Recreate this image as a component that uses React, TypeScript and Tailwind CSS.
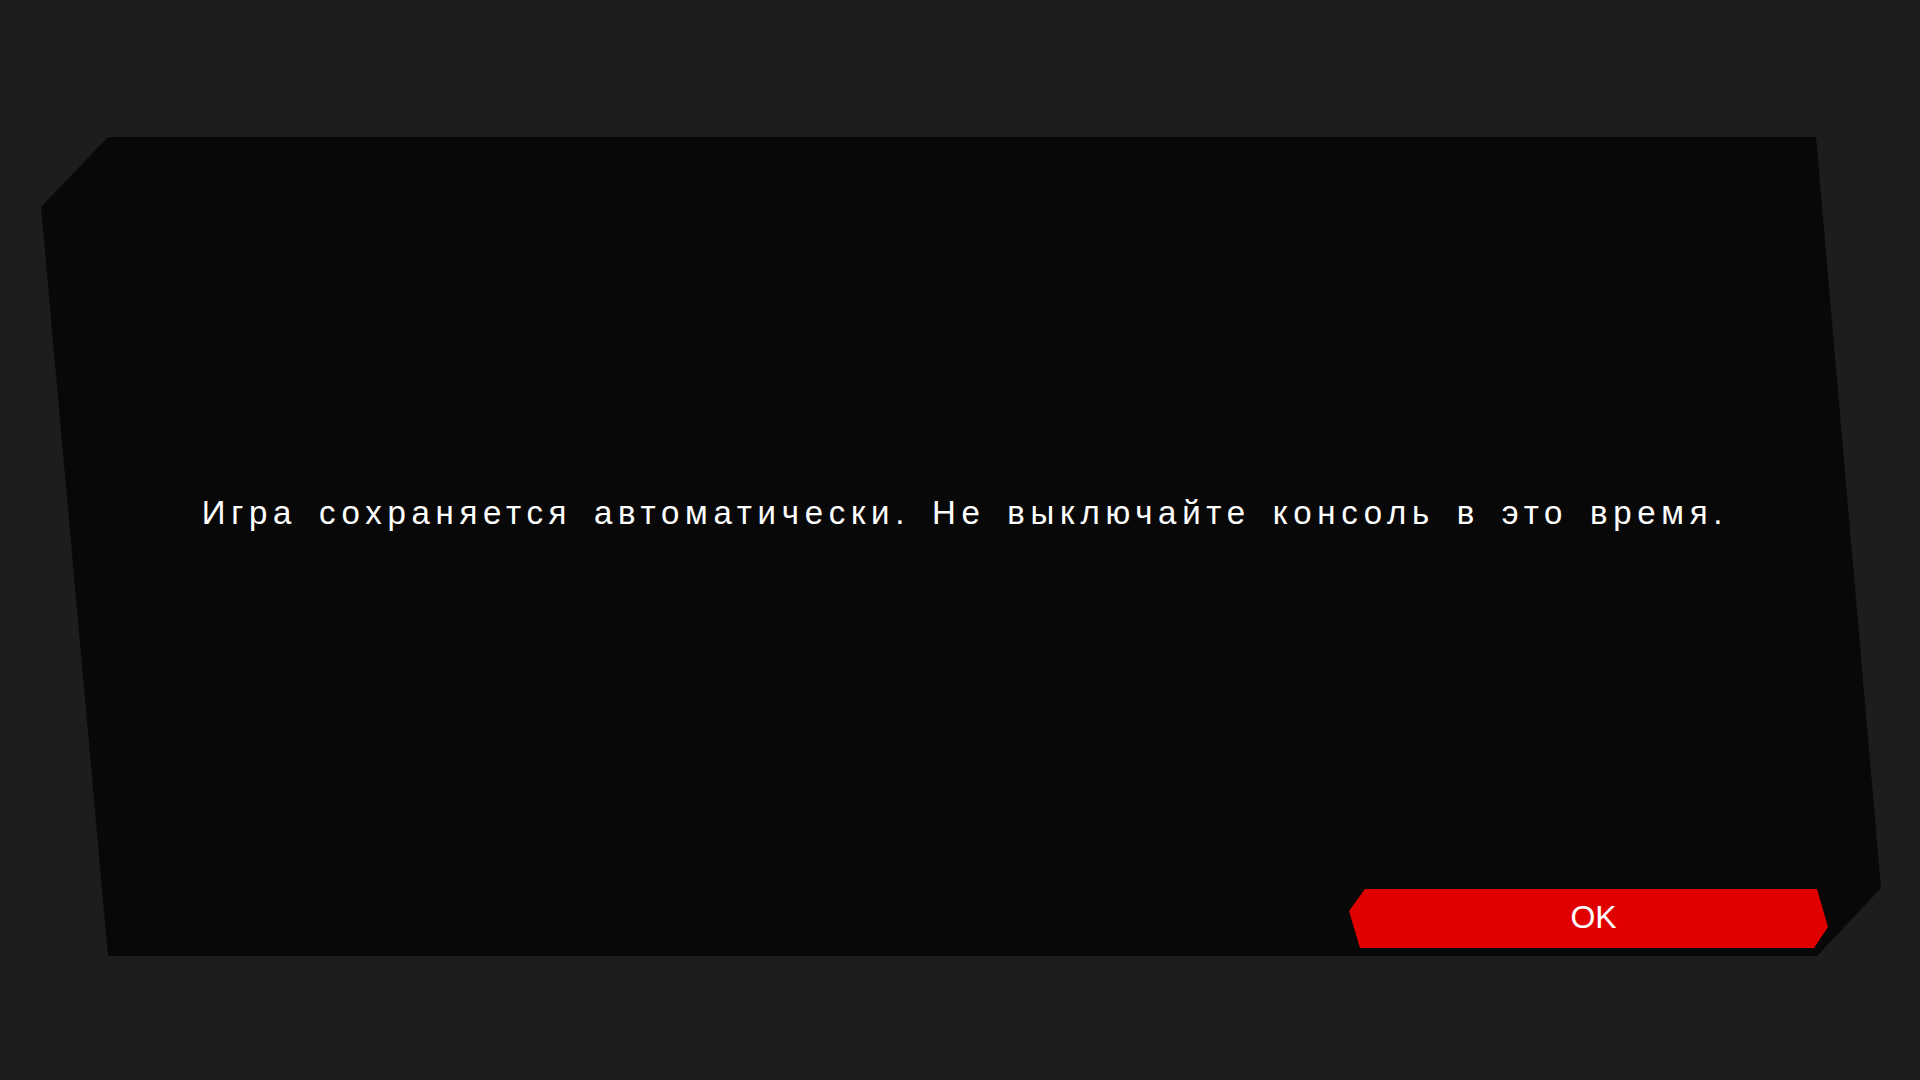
export default function App() {
  return (
    <div className="w-[1920px] h-[1080px] bg-[#1d1d1d] overflow-hidden pt-[137px] pl-[41px]">
      <div className="w-[1840px] h-[819px] bg-[#080808] flex flex-col [clip-path:polygon(67px_0,1775px_0,1840px_751px,1776px_819px,67px_819px,0_70px)]">
        <div className="flex-1 flex items-center justify-center">
          <p className="text-white text-[33px] tracking-[5.7px] [word-spacing:7px] font-['Liberation_Sans',Arial,sans-serif] whitespace-nowrap pl-[8px]">
            Игра сохраняется автоматически. Не выключайте консоль в это время.
          </p>
        </div>
        <button className="self-end mr-[53px] mb-[8px] w-[479px] h-[59px] bg-[#e00000] text-white text-[32px] font-['Liberation_Sans',Arial,sans-serif] flex items-center justify-center pl-[10px] pb-[4px] [clip-path:polygon(16px_0,468px_0,479px_38px,465px_59px,11px_59px,0_22px)]">
          OK
        </button>
      </div>
    </div>
  );
}
